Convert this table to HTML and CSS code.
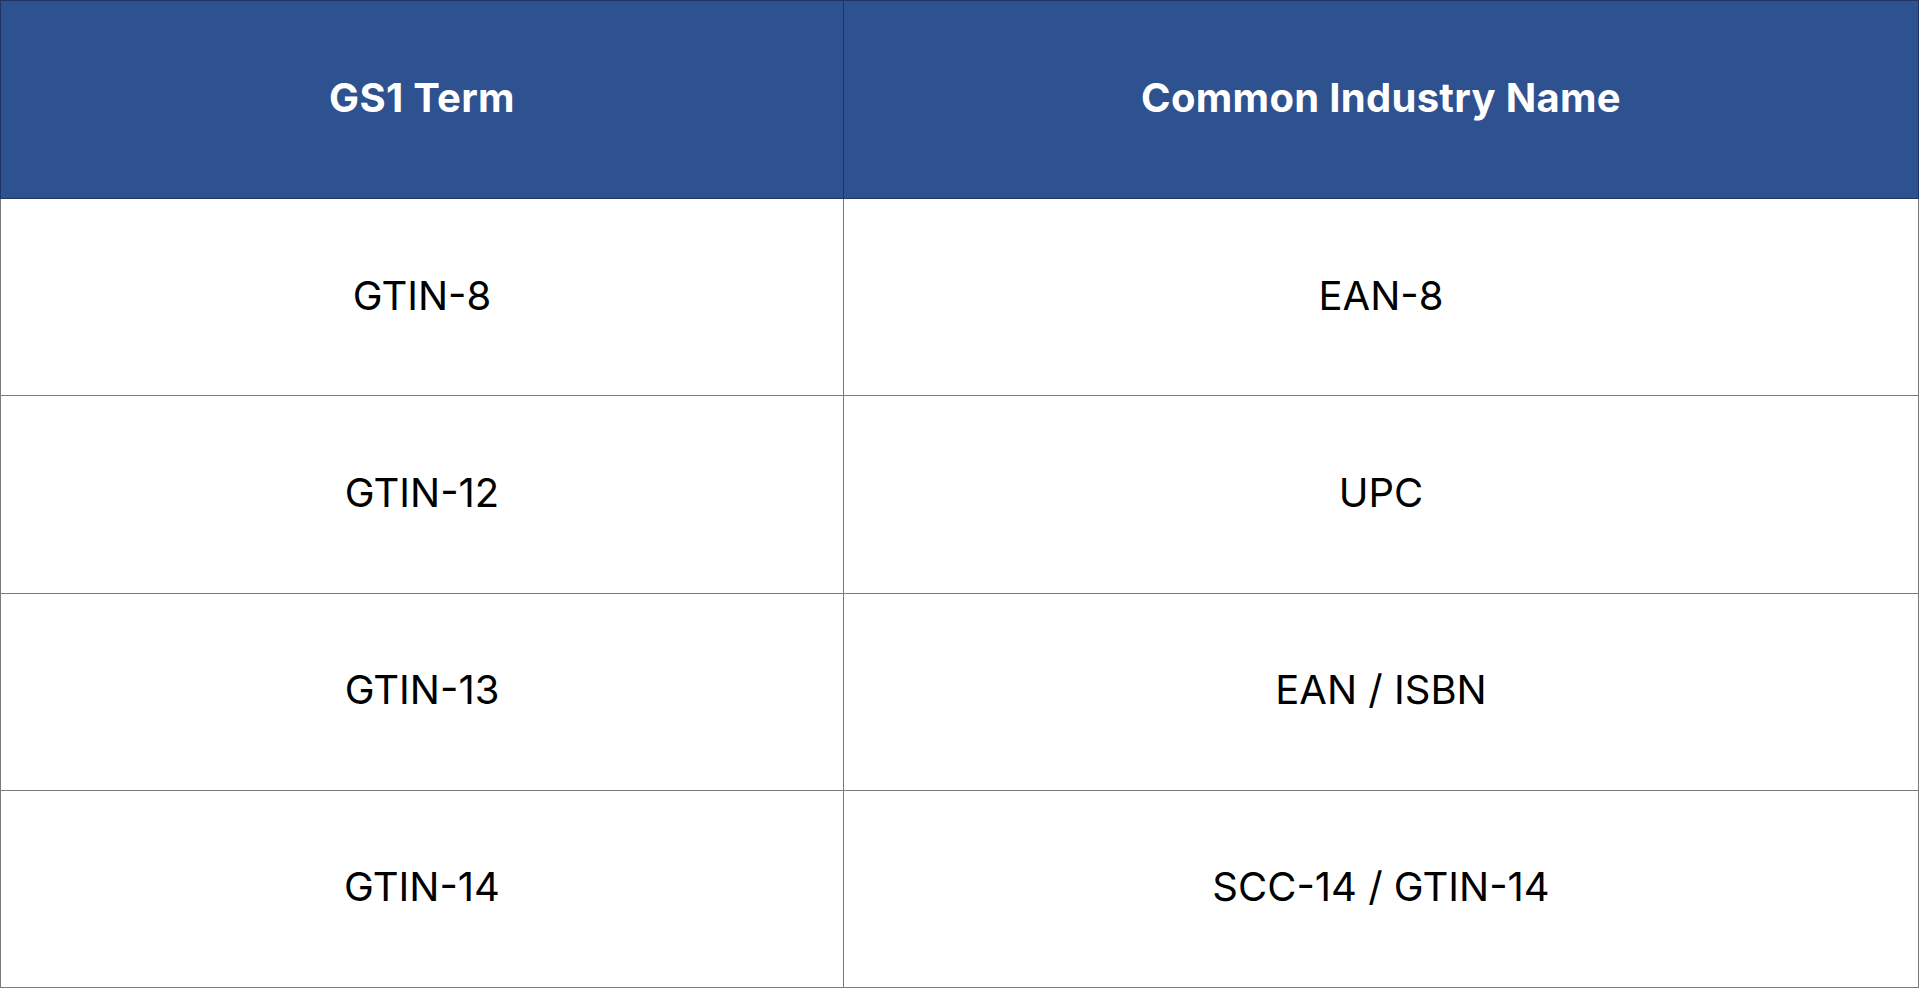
FILE: index.html
```html
<!DOCTYPE html>
<html>
<head>
<meta charset="utf-8">
<link rel="stylesheet" href="styles.css">
</head>
<body>
<table class="gtin-table">
  <thead>
    <tr><th class="col-a">GS1 Term</th><th class="col-b">Common Industry Name</th></tr>
  </thead>
  <tbody>
    <tr><td>GTIN-8</td><td>EAN-8</td></tr>
    <tr><td>GTIN-12</td><td>UPC</td></tr>
    <tr><td>GTIN-13</td><td>EAN / ISBN</td></tr>
    <tr><td>GTIN-14</td><td>SCC-14 / GTIN-14</td></tr>
  </tbody>
</table>
</body>
</html>
```
FILE: styles.css
```css
html, body {
  margin: 0;
  padding: 0;
  background: #ffffff;
  overflow: hidden;
}
.gtin-table {
  width: 1919px;
  height: 988px;
  border-collapse: collapse;
  table-layout: fixed;
  font-family: Inter, "Noto Sans", sans-serif;
}
.gtin-table th, .gtin-table td {
  text-align: center;
  vertical-align: middle;
  padding: 0 0 4px 0;
}
.gtin-table th {
  height: 193px;
  background: #2e5190;
  color: #ffffff;
  font-size: 40px;
  font-weight: 700;
  letter-spacing: 0.3px;
  border: 1px solid #1e3566;
}
.gtin-table td {
  height: 191px;
  color: #000000;
  font-size: 40px;
  font-weight: 400;
  border: 1px solid #7a7a7a;
}
.col-a { width: 842px; }
```
